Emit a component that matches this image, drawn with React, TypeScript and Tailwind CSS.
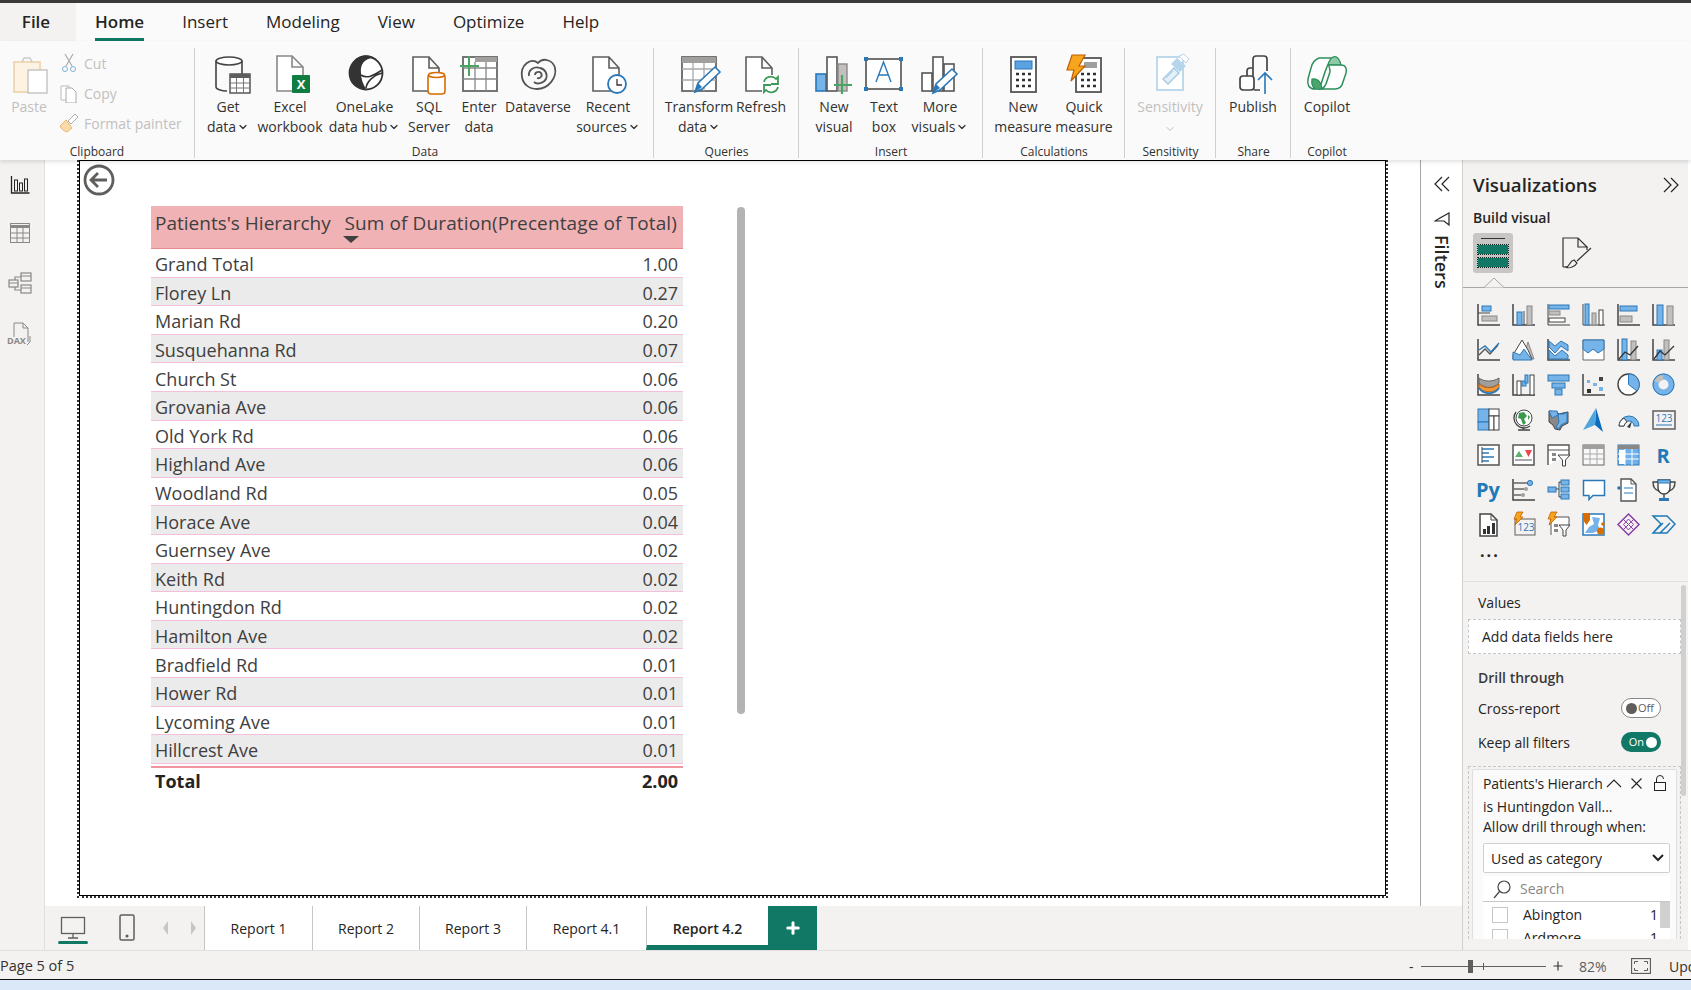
import type { ReactNode } from 'react'
import { ChevronDown, Plus } from 'lucide-react'

const SEGOE = "font-['Open_Sans',sans-serif]"

type RectProps = { x: number; y: number; w: number; h: number }
const Blue = ({ x, y, w, h }: RectProps) => <rect x={x} y={y} width={w} height={h} fill="#76b3e8" stroke="#2a78b8" />
const Grey = ({ x, y, w, h }: RectProps) => <rect x={x} y={y} width={w} height={h} fill="#c2c0be" stroke="#8a8886" />
const Line = ({ x, y, w, h }: RectProps) => <rect x={x} y={y} width={w} height={h} fill="#fff" stroke="#444" />
const Axis = () => <path d="M1 1v21h22" fill="none" stroke="#444" strokeWidth="1.5" />
const Frame = () => <rect x="1" y="2" width="21" height="20" fill="#fff" stroke="#555" strokeWidth="1.5" />
const Bolt = ({ x = 0, y = 0 }: { x?: number; y?: number }) => (
  <path transform={`translate(${x} ${y})`} d="M4 0h6L7 5h3L2 13l2-6H1z" fill="#f7a51c" stroke="#c15f00" strokeWidth=".8" />
)

const vizIcons: ReactNode[] = [
  <><Axis /><Blue x={5} y={3} w={9} h={5} /><Grey x={5} y={13} w={15} h={5} /><path d="M1 10h12" stroke="#444" /></>,
  <><Axis /><Blue x={5} y={9} w={5} h={13} /><Grey x={15} y={3} w={5} h={19} /><path d="M12 8v14" stroke="#444" /></>,
  <><path d="M1 1v21h22" fill="none" stroke="#444" /><Blue x={2} y={2} w={20} h={4} /><Grey x={2} y={8} w={11} h={4} /><Line x={2} y={15} w={16} h={4} /></>,
  <><path d="M1 1v21h22" fill="none" stroke="#444" /><Blue x={3} y={1} w={4} h={21} /><Grey x={10} y={10} w={4} h={12} /><Line x={17} y={7} w={4} h={15} /></>,
  <><Axis /><Blue x={3} y={3} w={17} h={5} /><Grey x={3} y={13} w={12} h={6} /></>,
  <><Axis /><Blue x={5} y={2} w={6} h={20} /><Grey x={15} y={3} w={6} h={19} /></>,
  <><Axis /><path d="M2 17l6-6 5 5 8-9" fill="none" stroke="#555" strokeWidth="1.4" /><path d="M2 12l6-4 6 6 8-9" fill="none" stroke="#2a78b8" strokeWidth="1.4" /></>,
  <><path d="M11 21l5-17 6 17z" fill="#c2c0be" stroke="#8a8886" /><path d="M1 21V17L10 2l6 10 4 9z" fill="#fff" stroke="#444" /><path d="M1 22v-8l7 3 4-6 8 11z" fill="#76b3e8" stroke="#2a78b8" /></>,
  <><Axis /><path d="M2 3l6 5 6-5 7 4v6l-7-5-6 7-6-6z" fill="#76b3e8" stroke="#2a78b8" /><path d="M2 12l6 6 7-6 6 5v4H2z" fill="#76b3e8" stroke="#2a78b8" /></>,
  <><path d="M1 2h21v20H1z" fill="#fff" stroke="#666" /><path d="M1 2h21v9l-6 4-5-4-5 4-5-4z" fill="#76b3e8" stroke="#2a78b8" /></>,
  <><Axis /><Blue x={5} y={1} w={5} h={21} /><Grey x={14} y={3} w={5} h={19} /><path d="M2 21l6-7 5 3 8-9" fill="none" stroke="#333" strokeWidth="1.3" /></>,
  <><Axis /><Blue x={5} y={12} w={5} h={10} /><Grey x={12} y={2} w={5} h={20} /><path d="M2 21l6-8 5 4 9-9" fill="none" stroke="#333" strokeWidth="1.3" /></>,
  <><Axis /><path d="M2 5c5 4 14 4 20 0v5c-6 6-14 6-20 0z" fill="#a19f9d" stroke="#666" /><path d="M2 11c6 5 14 5 20 0v4c-6 5-14 5-20 0z" fill="#f09a3e" stroke="#c15f00" /><path d="M2 15c5 7 15 7 20 0" fill="none" stroke="#2a78b8" strokeWidth="2" /></>,
  <><Axis /><Line x={5} y={8} w={4} h={14} /><Blue x={10} y={8} w={4} h={5} /><Blue x={13} y={2} w={3} h={8} /><Line x={18} y={2} w={4} h={20} /></>,
  <><Blue x={1} y={2} w={21} h={6} /><Blue x={5} y={10} w={13} h={5} /><Blue x={8} y={16} w={7} h={6} /></>,
  <><Axis /><rect x="5" y="7" width="3" height="3" fill="#76b3e8" /><rect x="11" y="10" width="4" height="3" fill="#76b3e8" /><rect x="17" y="14" width="4" height="4" fill="#76b3e8" /><rect x="17" y="4" width="4" height="4" fill="#444" /><rect x="5" y="16" width="4" height="4" fill="#333" /></>,
  <><circle cx="11.5" cy="11.5" r="10.5" fill="#fff" stroke="#444" strokeWidth="1.4" /><path d="M11.5 1A10.5 10.5 0 0 1 20 18L11.5 11.5z" fill="#76b3e8" stroke="#2a78b8" /></>,
  <><circle cx="11.5" cy="11.5" r="8" fill="none" stroke="#76b3e8" strokeWidth="6" /><path d="M2 8a10 10 0 0 1 9-6v5a5 5 0 0 0-4 3z" fill="#c2c0be" /><circle cx="11.5" cy="11.5" r="10.5" fill="none" stroke="#2a78b8" /></>,
  <><rect x="1" y="1" width="11" height="13" fill="#76b3e8" stroke="#2a78b8" /><rect x="1" y="14" width="11" height="8" fill="#76b3e8" stroke="#2a78b8" /><Line x={12} y={1} w={10} h={7} /><Line x={12} y={8} w={5} h={14} /><Line x={17} y={8} w={5} h={14} /></>,
  <><circle cx="12" cy="10" r="8" fill="#fff" stroke="#444" /><path d="M7 5l5-1 3 4-3 3 2 4-3 2-2-6-3-1zM16 7l2 2-2 3z" fill="#3c9a4d" /><path d="M4 4a10 10 0 0 0 14 14M11 19v3M6 22h12" fill="none" stroke="#444" strokeWidth="1.3" /></>,
  <><path d="M2 3l8 1 2 2 4-1 5-1v11l-6 3-2 4-5-1-2-4-4-3z" fill="#8a8886" stroke="#444" /><path d="M11 6h6l3-2v10l-6 3-2 4-3-2 3-5z" fill="#76b3e8" stroke="#2a78b8" /><path d="M2 3h8l1 4-6 3z" fill="#76b3e8" stroke="#2a78b8" /></>,
  <><path d="M14 0l7 24-8-7z" fill="#0f6cbd" /><path d="M14 0L1 22l12-5z" fill="#4fa6dd" /></>,
  <><path d="M2 18a10 10 0 0 1 20 0h-5a5 5 0 0 0-10 0z" fill="#76b3e8" stroke="#2a78b8" /><path d="M2 18a10 10 0 0 1 5-8l3 4a5 5 0 0 0-3 4z" fill="#fff" stroke="#444" /><path d="M10 19l5-6-2 7z" fill="#333" /></>,
  <><rect x="1" y="3" width="22" height="18" fill="#f3f2f1" stroke="#605e5c" strokeWidth="1.5" /><path d="M4 17h16" stroke="#2a78b8" /><text x="12" y="14" textAnchor="middle" fontSize="10" fill="#2a78b8" fontFamily="Open Sans">123</text></>,
  <><Frame /><path d="M5 6h12M5 10h7M5 14h12M5 18h7" stroke="#2a78b8" strokeWidth="1.5" /><path d="M5 4v16" stroke="#444" /></>,
  <><Frame /><path d="M3 14l4-6 4 6z" fill="#5cb26f" /><path d="M13 7h7l-3.5 7z" fill="#e8474d" /><path d="M3 17h17" stroke="#555" /></>,
  <><path d="M1 22V2h21v10" fill="#fff" stroke="#555" strokeWidth="1.4" /><path d="M1 7h21" stroke="#555" /><rect x="5" y="10" width="4" height="3" fill="#8a8886" /><rect x="5" y="15" width="4" height="3" fill="#8a8886" /><path d="M11 12h12l-4.5 5v6h-3v-6z" fill="#fff" stroke="#444" /></>,
  <><rect x="1" y="2" width="21" height="20" fill="#f8f8f8" stroke="#666" /><rect x="1" y="2" width="21" height="4" fill="#a19f9d" /><path d="M1 11h21M1 16h21M8 6v16M15 6v16" stroke="#aaa" /></>,
  <><rect x="1" y="2" width="21" height="20" fill="#6db0ea" stroke="#2a78b8" /><rect x="1" y="2" width="21" height="4" fill="#8a8886" /><rect x="2" y="7" width="6" height="14" fill="#fff" /><path d="M1 11h21M1 16h21M8 6v16M15 6v16" stroke="#fff" /></>,
  <text x="11" y="20" textAnchor="middle" fontSize="20" fontWeight="700" fill="#1f7ab8" fontFamily="Open Sans">R</text>,
  <text x="11" y="19" textAnchor="middle" fontSize="20" fontWeight="700" fill="#1f7ab8" fontFamily="Open Sans">Py</text>,
  <><Axis /><path d="M2 5h14M2 11h10M2 17h7" stroke="#666" strokeWidth="1.4" /><circle cx="18" cy="5" r="2.6" fill="#76b3e8" stroke="#2a78b8" /><circle cx="14" cy="11" r="2" fill="#a19f9d" /><circle cx="11" cy="17" r="2" fill="#a19f9d" /></>,
  <><rect x="1" y="9" width="8" height="5" fill="#76b3e8" stroke="#2a78b8" /><Blue x={14} y={2} w={8} h={5} /><Blue x={14} y={9} w={8} h={5} /><Blue x={14} y={16} w={8} h={5} /><path d="M9 11h3M12 4v15M12 4h2M12 19h2" fill="none" stroke="#444" /></>,
  <path d="M1.5 2.5h21v15H11l-4 4v-4H1.500z" fill="#fff" stroke="#2a78b8" strokeWidth="1.5" />,
  <><path d="M4 1h10l5 5v17H4z" fill="#fff" stroke="#555" strokeWidth="1.4" /><path d="M14 1v5h5" fill="none" stroke="#555" /><circle cx="2" cy="10" r="1.800" fill="#2a78b8" /><path d="M7 10h9M7 15h9" stroke="#2a78b8" /></>,
  <><path d="M6 2h12v8a6 6 0 0 1-12 0z" fill="#fff" stroke="#444" strokeWidth="1.4" /><path d="M6 2h12v3H6z" fill="#76b3e8" stroke="#2a78b8" /><path d="M6 4H1c0 6 2 8 6 9M18 4h5c0 6-2 8-6 9M12 16v4" fill="none" stroke="#444" strokeWidth="1.4" /><rect x="7" y="20" width="10" height="3" fill="#2a78b8" /></>,
  <><path d="M3 1h11l6 6v16H3z" fill="#fff" stroke="#444" strokeWidth="1.5" /><path d="M14 1v6h6" fill="none" stroke="#444" /><rect x="6" y="16" width="3" height="5" fill="#333" /><rect x="10" y="13" width="3" height="8" fill="#333" /><rect x="15" y="10" width="3" height="11" fill="#333" /></>,
  <><rect x="3" y="6" width="20" height="16" fill="#f3f2f1" stroke="#605e5c" /><text x="14" y="18" textAnchor="middle" fontSize="10" fill="#2a78b8" fontFamily="Open Sans">123</text><Bolt x={1} y={-1} /></>,
  <><path d="M4 22V4h18v8" fill="#fff" stroke="#555" /><rect x="7" y="11" width="4" height="3" fill="#8a8886" /><rect x="7" y="16" width="4" height="3" fill="#8a8886" /><path d="M12 12h11l-4 5v6h-3v-6z" fill="#fff" stroke="#444" /><Bolt x={0} y={-1} /></>,
  <><rect x="1" y="1" width="21" height="21" fill="#fff" stroke="#2a78b8" strokeWidth="1.500" /><path d="M10 4l8 1-2 7 2 5-7 3H3l4-6 5-3z" fill="#76b3e8" /><path d="M1 0h7v7l-3.500 5L1 7z" fill="#d86c00" /><circle cx="18.500" cy="18" r="3.500" fill="#d86c00" /><circle cx="21" cy="11" r="1.800" fill="#d86c00" /></>,
  <><path d="M11.500 1l10.500 10.500L11.500 22 1 11.500z" fill="none" stroke="#8a3fa8" strokeWidth="1.500" /><path d="M11.500 6l5 5.500-5 5.500-5-5.500zM6 6l11 11M17 6L6 17" fill="none" stroke="#8a3fa8" /></>,
  <path d="M1 3h14l8 8-8 9H1l8-9zM1 20l10-10M8 20l10-10" fill="none" stroke="#1f7ab8" strokeWidth="1.500" />,
]

const Ico = ({ children, size = 40 }: { children: ReactNode; size?: number }) => (
  <svg width={size} height={size} viewBox="0 0 40 40" fill="none" className="overflow-visible">{children}</svg>
)
const Doc = ({ x = 2, c = '#605e5c' }: { x?: number; c?: string }) => (
  <path d={`M${x} 36V2h16l10 11v23z M${x + 16} 2v11h10`} stroke={c} strokeWidth="1.600" fill="#fff" />
)

const ribbonIcons: Record<string, ReactNode> = {
  get: <g transform="translate(3 0)"><ellipse cx="18" cy="6" rx="13" ry="4" fill="#fff" stroke="#444" strokeWidth="1.600" /><path d="M5 6v26c0 2 5 4 11 4M31 6v14" stroke="#444" strokeWidth="1.600" /><rect x="19" y="19" width="20" height="19" fill="#fff" stroke="#555" strokeWidth="1.500" /><rect x="19" y="19" width="20" height="4" fill="#605e5c" /><path d="M19 28h20M19 33h20M25.500 23v15M32.500 23v15" stroke="#777" /></g>,
  excel: <><path d="M7 36V1h15l11 11v24z M22 1v11h11" stroke="#8a8886" strokeWidth="1.600" fill="#fff" /><rect x="22" y="20" width="18" height="18" rx="1" fill="#107c41" /><text x="31" y="34" textAnchor="middle" fontSize="13" fontWeight="700" fill="#fff" fontFamily="Open Sans">X</text></>,
  lake: <><circle cx="21" cy="18" r="16.500" fill="#fff" stroke="#333" strokeWidth="1.800" /><path d="M9 6C15-1 25-1 29 3 19 3 15 10 16 18c0 6 2 11 5 16C11 34 2 26 5 15c1-4 2-6 4-9z" fill="#333" /><path d="M16 20c6 4 12 1 21-5M21 33c1-7 8-13 16-15" stroke="#333" strokeWidth="1.600" /></>,
  sql: <><Doc x={4} /><rect x="19" y="19" width="17" height="20" rx="3" fill="#fff" stroke="#d86c00" strokeWidth="1.600" /><ellipse cx="27.500" cy="20" rx="8" ry="2.500" fill="#fff" stroke="#d86c00" strokeWidth="1.500" /></>,
  enter: <><rect x="4" y="2" width="34" height="34" fill="#fff" stroke="#666" strokeWidth="1.800" /><rect x="16" y="2" width="22" height="5" fill="#a19f9d" /><path d="M4 13h34M4 24h34M16 7v29M27 7v29" stroke="#888" strokeWidth="1.300" /><path d="M10 1v20M1 11h19" stroke="#4aa564" strokeWidth="2" /></>,
  dataverse: <><path d="M4 22C2 10 13 2 20 8c5-6 15-3 17 5 2 9-6 21-18 21C11 34 5 29 4 22z" stroke="#555" strokeWidth="1.800" /><path d="M11 21c-1-6 5-10 11-8 5 1 8 6 6 11-2 4-9 6-12 3" stroke="#555" strokeWidth="1.800" /><path d="M17 20c0-3 4-4 6-2 2 3-1 6-4 5" stroke="#555" strokeWidth="1.800" /></>,
  recent: <><Doc x={5} /><circle cx="29" cy="29" r="9" fill="#fff" stroke="#2a78b8" strokeWidth="1.800" /><path d="M29 24v6h5" stroke="#333" strokeWidth="1.300" /></>,
  transform: <><rect x="3" y="2" width="34" height="34" fill="#fff" stroke="#666" strokeWidth="1.800" /><rect x="3" y="2" width="34" height="6" fill="#a19f9d" /><path d="M3 14h34M3 25h34M14 8v28M25 8v28" stroke="#aaa" strokeWidth="1.300" /><path d="M16 37l3-9 17-16 5 5-18 17z" fill="#fff" stroke="#2a78b8" strokeWidth="1.600" /><path d="M16 37l3-9 4 4z" fill="#2a78b8" /></>,
  refresh: <><Doc x={5} /><rect x="21" y="20" width="18" height="19" fill="#fff" /><path d="M23 27a7 7 0 0 1 12-3l2-2v7h-7M37 32a7 7 0 0 1-12 3l-2 2v-7h7" stroke="#3b9a57" strokeWidth="1.800" fill="none" /></>,
  newv: <><rect x="2" y="19" width="10" height="17" fill="#76b3e8" stroke="#2a78b8" strokeWidth="1.600" /><rect x="13" y="2" width="10" height="34" fill="#fff" stroke="#555" strokeWidth="1.600" /><rect x="24" y="9" width="9" height="27" fill="#c2c0be" stroke="#8a8886" strokeWidth="1.400" /><path d="M28 20v19M20 30h18" stroke="#4aa564" strokeWidth="2.200" /></>,
  text: <><rect x="2" y="4" width="35" height="30" fill="#fff" stroke="#444" strokeWidth="1.500" /><path d="M12 27l7.500-20L27 27M15 20h9" stroke="#2a78b8" strokeWidth="1.400" /><rect x="0" y="2" width="4" height="4" fill="#2a78b8" /><rect x="35" y="2" width="4" height="4" fill="#2a78b8" /><rect x="0" y="32" width="4" height="4" fill="#2a78b8" /><rect x="35" y="32" width="4" height="4" fill="#2a78b8" /></>,
  more: <><rect x="2" y="18" width="10" height="18" fill="#fff" stroke="#555" strokeWidth="1.600" /><rect x="13" y="2" width="10" height="34" fill="#fff" stroke="#555" strokeWidth="1.600" /><rect x="24" y="9" width="10" height="27" fill="#fff" stroke="#555" strokeWidth="1.600" /><path d="M13 38l3-9 16-15 5 5-17 16z" fill="#fff" stroke="#2a78b8" strokeWidth="1.600" /><path d="M13 38l3-9 4 4z" fill="#2a78b8" /></>,
  measure: <><rect x="8" y="2" width="25" height="35" fill="#fff" stroke="#555" strokeWidth="1.800" /><rect x="12" y="6" width="17" height="8" fill="#5ba3e0" stroke="#2a78b8" /><path d="M13 19h3M19 19h3M25 19h3M13 25h3M19 25h3M25 25h3M13 31h3M19 31h3M25 31h3" stroke="#333" strokeWidth="2.600" /></>,
  quick: <><rect x="12" y="3" width="25" height="34" fill="#fff" stroke="#555" strokeWidth="1.800" /><rect x="20" y="7" width="13" height="6" fill="#a19f9d" /><path d="M17 19h3M23 19h3M29 19h3M17 25h3M23 25h3M29 25h3M17 31h3M23 31h3M29 31h3" stroke="#333" strokeWidth="2.600" /><path d="M8 0h13l-6 11h6L7 26l3-11H3z" fill="#f7a51c" stroke="#c15f00" strokeWidth="1.200" /></>,
  sens: <><rect x="7" y="2" width="26" height="33" fill="#fff" stroke="#b7d5ea" strokeWidth="1.800" /><path d="M13 24l11-11 5 5-11 11z" fill="#e4f0f8" stroke="#a7cbe3" strokeWidth="1.500" /><path d="M16 23l7-7" stroke="#a7cbe3" /><path d="M21 9l6-6 9 8-6 6z" fill="#b7d5ea" /><path d="M29 1l5-2 5 5-3 4z" fill="#fff" stroke="#b7d5ea" /></>,
  publish: <><rect x="7" y="21" width="14" height="14" rx="3" fill="#fff" stroke="#444" strokeWidth="1.700" /><path d="M14 21v-5a3 3 0 0 1 3-3h3M20 21V4a3 3 0 0 1 3-3h8a3 3 0 0 1 3 3v12M21 35h11" stroke="#444" strokeWidth="1.700" /><rect x="27" y="17" width="12" height="23" fill="#fafafa" /><path d="M32 39V18M25 25l7-7 7 7" stroke="#2a78b8" strokeWidth="1.600" /></>,
  copilot: <><path d="M12 3h14c-3 2-6 8-8 14l-3 9c-1 5-3 8-7 8-6 0-8-4-7-10l3-11c1-5 3-8 8-10z" fill="#fff" stroke="#2e8f5b" strokeWidth="1.500" /><path d="M26 2c4-2 7 3 8 8H21c1-4 3-7 5-8z" fill="#8ccba5" stroke="#2e8f5b" strokeWidth="1.200" /><path d="M21 10h13c5 0 6 4 5 8l-3 9c-1 4-4 7-8 7H14c3-1 5-4 6-8l3-9c0-3-1-7-2-7z" fill="#fff" stroke="#2e8f5b" strokeWidth="1.500" /><path d="M5 24c5-1 9 2 10 10-2 1-4 0-6 0-3-1-5-5-4-10z" fill="#4aa56f" stroke="#2e8f5b" strokeWidth="1.200" /></>,
}

const BigBtn = ({ icon, lines, chevron, disabled, className }: { icon: string; lines: string[]; chevron?: boolean; disabled?: boolean; className: string }) => (
  <div className={`flex flex-col items-center ${className}`}>
    <div className="h-[42px] flex items-start"><Ico>{ribbonIcons[icon]}</Ico></div>
    <div className={`flex flex-col items-center whitespace-nowrap text-[14px] leading-[20px] ${disabled ? 'text-[#c2c0be]' : 'text-[#323130]'}`}>
      {lines.map((l, i) => (
        <span key={l} className="flex items-center gap-[1px]">
          {l}
          {chevron && i === lines.length - 1 && <ChevronDown size={12} strokeWidth={2.500} />}
        </span>
      ))}
      {disabled && <ChevronDown size={12} strokeWidth={2} className="mt-[6px]" />}
    </div>
  </div>
)

const Group = ({ label, className, children }: { label: string; className: string; children: ReactNode }) => (
  <div className={`h-[110px] flex flex-col border-r border-[#d2d0ce] ${className}`}>
    <div className="flex h-[96px] shrink-0 pt-[7px]">{children}</div>
    <div className="h-[16px] text-center text-[12px] leading-[16px] text-[#323130]">{label}</div>
  </div>
)

const SmallBtn = ({ label, children }: { label: string; children: ReactNode }) => (
  <div className="flex items-center gap-[5px] h-[30px] ml-[1px] text-[14px] text-[#c2c0be] whitespace-nowrap">
    <svg width="20" height="20" viewBox="0 0 20 20" fill="none">{children}</svg>
    {label}
  </div>
)

const rows = [
  ['Grand Total', '1.00'], ['Florey Ln', '0.27'], ['Marian Rd', '0.20'], ['Susquehanna Rd', '0.07'], ['Church St', '0.06'],
  ['Grovania Ave', '0.06'], ['Old York Rd', '0.06'], ['Highland Ave', '0.06'], ['Woodland Rd', '0.05'], ['Horace Ave', '0.04'],
  ['Guernsey Ave', '0.02'], ['Keith Rd', '0.02'], ['Huntingdon Rd', '0.02'], ['Hamilton Ave', '0.02'], ['Bradfield Rd', '0.01'],
  ['Hower Rd', '0.01'], ['Lycoming Ave', '0.01'], ['Hillcrest Ave', '0.01'],
]

const Ribbon = () => (
  <div className="h-[119px] bg-[#fafafa] flex pt-[7px] shadow-[0_2px_4px_rgba(0,0,0,0.12)] relative z-10">
    <Group label="Clipboard" className="w-[195px]">
      <div className="w-[58px] flex flex-col items-center">
        <div className="h-[42px]">
          <svg width="42" height="40" viewBox="0 0 42 40" fill="none"><path d="M6 7h26v30H6z" fill="#fdf3e3" stroke="#f0d9b5" strokeWidth="2" /><path d="M14 7l2-4h6l2 4" stroke="#ccc" strokeWidth="1.500" /><rect x="20" y="15" width="19" height="23" fill="#fff" stroke="#c8c6c4" strokeWidth="1.500" /></svg>
        </div>
        <span className="text-[14px] leading-[20px] text-[#c2c0be]">Paste</span>
      </div>
      <div className="flex flex-col -mt-[7px]">
        <SmallBtn label="Cut"><path d="M6 1l7 12M14 1L7 13" stroke="#aaa" strokeWidth="1.200" /><circle cx="6" cy="16" r="2.500" stroke="#7fb2d8" /><circle cx="14" cy="16" r="2.500" stroke="#7fb2d8" /></SmallBtn>
        <SmallBtn label="Copy"><path d="M2 3h8v14H2z" fill="#fff" stroke="#bbb" /><path d="M7 5h6l4 4v11H7z" fill="#fff" stroke="#aaa" /></SmallBtn>
        <SmallBtn label="Format painter"><path d="M1 13l6-6 6 8-5 4c-3-1-6-3-7-6z" fill="#fbd9a9" stroke="#e9b775" /><path d="M9 8l7-7 3 3-7 7z" fill="#fff" stroke="#aaa" /></SmallBtn>
      </div>
    </Group>
    <Group label="Data" className="w-[459px] pl-[2px]">
      <BigBtn icon="get" lines={['Get', 'data']} chevron className="w-[62px]" />
      <BigBtn icon="excel" lines={['Excel', 'workbook']} className="w-[62px]" />
      <BigBtn icon="lake" lines={['OneLake', 'data hub']} chevron className="w-[87px]" />
      <BigBtn icon="sql" lines={['SQL', 'Server']} className="w-[42px]" />
      <BigBtn icon="enter" lines={['Enter', 'data']} className="w-[58px]" />
      <BigBtn icon="dataverse" lines={['Dataverse']} className="w-[60px]" />
      <BigBtn icon="recent" lines={['Recent', 'sources']} chevron className="w-[80px]" />
    </Group>
    <Group label="Queries" className="w-[145px] pl-[1px]">
      <BigBtn icon="transform" lines={['Transform', 'data']} chevron className="w-[88px]" />
      <BigBtn icon="refresh" lines={['Refresh']} className="w-[36px]" />
    </Group>
    <Group label="Insert" className="w-[184px] pl-[1px]">
      <BigBtn icon="newv" lines={['New', 'visual']} className="w-[68px]" />
      <BigBtn icon="text" lines={['Text', 'box']} className="w-[32px]" />
      <BigBtn icon="more" lines={['More', 'visuals']} chevron className="w-[80px]" />
    </Group>
    <Group label="Calculations" className="w-[142px] pl-[1px]">
      <BigBtn icon="measure" lines={['New', 'measure']} className="w-[78px]" />
      <BigBtn icon="quick" lines={['Quick', 'measure']} className="w-[44px]" />
    </Group>
    <Group label="Sensitivity" className="w-[91px] pl-[1px]">
      <BigBtn icon="sens" lines={['Sensitivity']} disabled className="w-[88px]" />
    </Group>
    <Group label="Share" className="w-[75px] pl-[1px]">
      <BigBtn icon="publish" lines={['Publish']} className="w-[72px]" />
    </Group>
    <Group label="Copilot" className="w-[72px] border-r-0">
      <BigBtn icon="copilot" lines={['Copilot']} className="w-[72px]" />
    </Group>
  </div>
)

const Sidebar = () => (
  <div className="w-[45px] flex flex-col items-center bg-[#f3f2f1] border-r border-[#e1dfdd] pt-[15px] pr-[4px] gap-[27px] shrink-0">
    <svg width="20" height="20" viewBox="0 0 20 20" fill="none" stroke="#252423"><path d="M1.500 1v17h18" strokeWidth="1.300" /><rect x="4.500" y="5" width="3" height="11" /><rect x="9.500" y="8" width="3" height="8" /><rect x="14.500" y="4" width="3" height="12" /></svg>
    <svg width="22" height="22" viewBox="0 0 22 22" fill="none" stroke="#8a8886"><rect x="1.500" y="1.500" width="19" height="19" /><path d="M1 4.500h20" strokeWidth="3" /><path d="M1 11h20M1 16h20M8 5v16M14 5v16" /></svg>
    <svg width="24" height="24" viewBox="0 0 24 24" fill="none" stroke="#8a8886" strokeWidth="1.200"><rect x="1" y="9" width="9" height="7" /><rect x="13" y="2" width="10" height="8" /><rect x="13" y="14" width="10" height="8" /><path d="M1 12h9M13 5h10M13 17h10M7 9V6h6M7 16v3h6" /></svg>
    <div className="relative w-[24px] h-[24px]">
      <svg width="24" height="24" viewBox="0 0 24 24" fill="none" stroke="#8a8886"><path d="M6 15V1h9l5 5v14M15 1v5h5M22 14v6l-3 3" /></svg>
      <span className="absolute left-[-1px] top-[14px] text-[9px] leading-[9px] font-bold text-[#8a8886]">DAX</span>
    </div>
  </div>
)

const Canvas = () => (
  <div className="flex-1 bg-white pl-[32px] pr-[32px] pb-[8px] min-h-0">
    <div className="h-full border-l-2 border-r-2 border-b-2 border-dotted border-[#333]">
      <div className="relative h-full bg-white border border-black pl-[71px] pt-[45px] flex items-start gap-[54px]">
        <svg className="absolute left-[3px] top-[3px]" width="32" height="32" viewBox="0 0 32 32" fill="none" stroke="#605e5c" strokeWidth="2.800">
          <circle cx="16" cy="16" r="14" /><path d="M24 16H8M15 9l-7 7 7 7" />
        </svg>
        <div className="w-[532px] text-[#404040]">
          <div className="relative h-[43px] bg-[#f0b2b5] border-b border-[#e88b90] flex items-center justify-between pl-[4px] pr-[6px] pb-[7px] text-[19px]">
            <span>Patients's Hierarchy</span>
            <span className="tracking-[0.12px]">Sum of Duration(Precentage of Total)</span>
            <span className="absolute left-[192px] bottom-[5px] w-0 h-0 border-x-[8px] border-t-[7px] border-x-transparent border-t-[#404040]" />
          </div>
          {rows.map(([name, val], i) => (
            <div key={name} className={`h-[28.600px] flex items-center justify-between pl-[4px] pr-[5px] pt-[4px] border-b border-[#f5bfdc] text-[18px] ${i % 2 ? 'bg-[#ebebeb]' : 'bg-white'}`}>
              <span>{name}</span><span>{val}</span>
            </div>
          ))}
          <div className="h-[30px] mt-[2px] border-t-2 border-[#f2959f] flex items-center justify-between pl-[4px] pr-[5px] text-[18px] font-bold text-[#252423]">
            <span>Total</span><span>2.00</span>
          </div>
        </div>
        <div className="w-[8px] h-[507px] mt-[1px] rounded-full bg-[#b3b3b3]" />
      </div>
    </div>
  </div>
)

const tabs = [
  { name: 'Report 1', w: 'w-[108px]' },
  { name: 'Report 2', w: 'w-[107px]' },
  { name: 'Report 3', w: 'w-[107px]' },
  { name: 'Report 4.1', w: 'w-[120px]' },
]

const PageTabs = () => (
  <div className="h-[44px] shrink-0 bg-[#f3f2f1] flex">
    <div className="w-[159px] relative flex items-center">
      <svg className="ml-[15px]" width="26" height="26" viewBox="0 0 26 26" fill="none" stroke="#605e5c" strokeWidth="1.300"><rect x="1.500" y="2.500" width="23" height="16" /><path d="M13 18.500v4M8 23h10" /></svg>
      <span className="absolute left-[13px] bottom-[6px] w-[30px] h-[3px] rounded-full bg-[#117865]" />
      <svg className="ml-[32px]" width="18" height="28" viewBox="0 0 18 28" fill="none" stroke="#605e5c" strokeWidth="1.500"><rect x="2" y="1" width="14" height="25" rx="1.500" /><circle cx="9" cy="22" r=".8" /></svg>
      <span className="ml-[27px] w-0 h-0 border-y-[7px] border-r-[5px] border-y-transparent border-r-[#c8c6c4]" />
      <span className="ml-[23px] w-0 h-0 border-y-[7px] border-l-[5px] border-y-transparent border-l-[#c8c6c4]" />
    </div>
    {tabs.map((t) => (
      <div key={t.name} className={`h-full flex items-center justify-center bg-white border-l border-[#c8c6c4] text-[14px] text-[#252423] ${t.w}`}>{t.name}</div>
    ))}
    <div className="w-[122px] h-full flex items-center justify-center bg-white border-l border-[#c8c6c4] border-b-[5px] border-b-[#117865] pt-[5px] text-[14px] font-semibold text-[#252423]">Report 4.2</div>
    <div className="w-[49px] h-full flex items-center justify-center bg-[#117865]"><Plus size={18} strokeWidth={4} className="text-white" /></div>
  </div>
)

const FilterPane = () => (
  <div className="w-[42px] bg-white border-l border-[#a8a6a4] flex flex-col items-center shrink-0">
    <svg className="mt-[16px]" width="16" height="16" viewBox="0 0 16 16" fill="none" stroke="#252423" strokeWidth="1.200"><path d="M8 1L1 8l7 7M15 1L8 8l7 7" /></svg>
    <svg className="mt-[20px]" width="16" height="14" viewBox="0 0 16 14" fill="none" stroke="#252423" strokeWidth="1.200"><path d="M15 1v12l-5-4H1l5-3z" /></svg>
    <span className="mt-[9px] [writing-mode:vertical-rl] text-[18px] leading-[22px] font-semibold text-[#252423]">Filters</span>
  </div>
)

const VizPane = () => (
  <div className="w-[229px] shrink-0 flex bg-white">
    <div className="w-[226px] bg-[#f3f2f1] border-l border-[#d2d0ce] flex flex-col overflow-hidden">
      <div className="h-[50px] shrink-0 flex items-center justify-between pl-[10px] pr-[9px]">
        <span className="text-[18.700px] font-semibold text-[#252423] leading-[26px]">Visualizations</span>
        <svg width="16" height="16" viewBox="0 0 16 16" fill="none" stroke="#252423" strokeWidth="1.200"><path d="M1 1l7 7-7 7M8 1l7 7-7 7" /></svg>
      </div>
      <div className="pl-[10px] mt-[-2px] text-[14px] font-semibold leading-[20px] text-[#252423]">Build visual</div>
      <div className="flex items-center pl-[10px] mt-[5px] gap-[47px]">
        <div className="w-[40px] h-[40px] rounded-[3px] bg-[#c8c6c4] flex flex-col items-center pt-[5px]">
          <span className="w-[24px] h-px bg-[#333]" />
          <span className="w-[30px] h-[9px] mt-[6px] bg-[#117865] outline-1 outline-dotted outline-[#222]" />
          <span className="w-[30px] h-[9px] mt-[4px] bg-[#117865] outline-1 outline-dotted outline-[#222]" />
        </div>
        <svg width="32" height="32" viewBox="0 0 32 32" fill="none" stroke="#333" strokeWidth="1.200"><path d="M3 30V1h15l9 9h-9V1M27 10v3M3 30h5" /><path d="M31 11L17 24M12 30c-2 1-5 1-6 0 4 0 3-6 8-7l3 3c-1 2-2 3-5 4z" /></svg>
      </div>
      <div className="relative h-[15px] shrink-0 border-b border-[#a8a6a4]">
        <svg className="absolute left-[20px] bottom-[-1px]" width="22" height="11" viewBox="0 0 22 11" fill="none"><path d="M0 10.500h1L11 1l10 9.500h1" fill="#f3f2f1" stroke="#a8a6a4" /></svg>
      </div>
      <div className="grid grid-cols-[repeat(6,23px)] gap-x-[12px] gap-y-[12px] pl-[14px] pt-[15px] shrink-0">
        {vizIcons.map((ic, i) => (
          <svg key={i} width="23" height="23" viewBox="0 0 23 23" className="overflow-visible">{ic}</svg>
        ))}
      </div>
      <div className="pl-[17px] mt-[8px] h-[14px] shrink-0 text-[#252423] font-bold tracking-[2px] leading-[14px]">...</div>
      <div className="mt-[23px] border-t border-[#e1dfdd] flex flex-1 min-h-0 relative">
        <div className="flex-1 min-w-0 pl-[5px] text-[14px] text-[#252423]">
          <div className="pl-[10px] pt-[11px] h-[37px] text-[14px] leading-[20px]">Values</div>
          <div className="h-[35px] border border-dashed border-[#c8c6c4] bg-white pl-[13px] flex items-center">Add data fields here</div>
          <div className="pl-[10px] mt-[14px] font-semibold text-[#3b3a39] leading-[20px]">Drill through</div>
          <div className="pl-[10px] pr-[20px] mt-[10px] flex items-center justify-between h-[20px]">
            <span>Cross-report</span>
            <span className="w-[40px] h-[20px] rounded-full border border-[#8a8886] bg-white flex items-center pl-[4px] gap-[1px] text-[11px] text-[#605e5c]"><span className="w-[11px] h-[11px] rounded-full bg-[#605e5c]" />Off</span>
          </div>
          <div className="pl-[10px] pr-[20px] mt-[14px] flex items-center justify-between h-[20px]">
            <span>Keep all filters</span>
            <span className="w-[40px] h-[20px] rounded-full bg-[#117865] flex items-center justify-end pr-[4px] gap-[2px] text-[11px] text-white">On<span className="w-[11px] h-[11px] rounded-full bg-white" /></span>
          </div>
          <div className="mt-[14px] h-[173px] overflow-hidden border border-b-0 border-dashed border-[#c8c6c4] px-[3px] pt-[2px]">
            <div className="bg-[#fafafa] border border-[#e1dfdd] rounded-[2px] h-[200px] pl-[10px] pr-[5px]">
              <div className="flex items-center h-[25px] pt-[1px] whitespace-nowrap">
                <span className="w-[120px] tracking-[-0.15px]">Patients's Hierarch</span>
                <svg className="ml-[3px]" width="16" height="10" viewBox="0 0 16 10" fill="none" stroke="#252423" strokeWidth="1.100"><path d="M1 9l7-7 7 7" /></svg>
                <svg className="ml-[9px]" width="11" height="11" viewBox="0 0 11 11" fill="none" stroke="#252423" strokeWidth="1.100"><path d="M.5.5l10 10M10.500.5l-10 10" /></svg>
                <svg className="ml-[11px]" width="14" height="16" viewBox="0 0 14 16" fill="none" stroke="#252423"><rect x="1.500" y="7.500" width="11" height="8" /><path d="M3.500 7V4a3.500 3.500 0 0 1 7 0" /></svg>
              </div>
              <div className="leading-[20px] mt-[2px]">is Huntingdon Vall...</div>
              <div className="leading-[20px]">Allow drill through when:</div>
              <div className="mt-[6px] h-[30px] bg-white border border-[#d2d0ce] rounded-[2px] flex items-center justify-between pl-[7px] pr-[5px] mr-[1px]">
                <span>Used as category</span>
                <svg width="12" height="8" viewBox="0 0 12 8" fill="none" stroke="#252423" strokeWidth="2"><path d="M1 1l5 5 5-5" /></svg>
              </div>
              <div className="h-[26px] mt-[3px] mr-[1px] bg-white border-b border-[#c8c6c4] flex items-center pl-[9px] gap-[8px] text-[#8a8886]">
                <svg width="20" height="20" viewBox="0 0 20 20" fill="none" stroke="#444" strokeWidth="1.200"><circle cx="12" cy="8" r="6" /><path d="M8 12l-6 7" /></svg>Search
              </div>
              <div className="relative mr-[1px] bg-white">
                <div className="flex items-center h-[25px] pl-[9px] pr-[12px]"><span className="w-[16px] h-[16px] border border-[#c8c6c4] mr-[15px]" /><span className="flex-1">Abington</span><span>1</span></div>
                <div className="flex items-center h-[20px] pl-[9px] pr-[12px]"><span className="w-[16px] h-[16px] border border-[#c8c6c4] mr-[15px]" /><span className="flex-1">Ardmore</span><span>1</span></div>
                <span className="absolute right-0 top-0 w-[10px] h-[26px] bg-[#d0d0d0]" />
              </div>
            </div>
          </div>
        </div>
        <div className="w-[7px] shrink-0 pt-[3px]"><div className="w-[5px] h-[211px] rounded-full bg-[#d2d0ce]" /></div>
      </div>
    </div>
  </div>
)

export default function App() {
  return (
    <div className={`w-[1691px] h-[990px] overflow-hidden flex flex-col bg-white ${SEGOE}`}>
      <div className="h-[3px] bg-[#3b3a39] shrink-0" />
      <div className="h-[38px] bg-[#fafafa] flex shrink-0 text-[17px] text-[#252423]">
        <div className="w-[76px] bg-[#f3f2f1] flex items-center justify-center pr-[4px] font-semibold">File</div>
        <div className="ml-[19px] flex gap-[38px]">
          <div className="h-full flex items-center border-b-[3px] border-[#117865] pt-[3px] font-semibold">Home</div>
          {['Insert', 'Modeling', 'View', 'Optimize', 'Help'].map((t) => (
            <div key={t} className="h-full flex items-center">{t}</div>
          ))}
        </div>
      </div>
      <Ribbon />
      <div className="h-[790px] shrink-0 flex">
        <Sidebar />
        <div className="flex-1 min-w-0 flex flex-col">
          <div className="flex-1 min-h-0 flex">
            <Canvas />
            <FilterPane />
          </div>
          <PageTabs />
        </div>
        <VizPane />
      </div>
      <div className="h-[29px] shrink-0 bg-[#f3f2f1] flex items-center pt-[2px] text-[14px] text-[#323130] border-t border-[#e1dfdd]">
        <span className="text-[14.500px]">Page 5 of 5</span>
        <div className="ml-auto flex items-center whitespace-nowrap">
          <span className="w-[9px]">-</span>
          <div className="relative w-[125px] h-px bg-[#605e5c] mx-[3px]">
            <span className="absolute left-[47px] top-[-6px] w-[5px] h-[13px] bg-[#605e5c]" />
            <span className="absolute left-[62px] top-[-3px] w-px h-[7px] bg-[#605e5c]" />
          </div>
          <Plus size={14} strokeWidth={2} className="ml-[2px]" />
          <span className="ml-[14px] w-[36px] text-[#605e5c]">82%</span>
          <svg className="ml-[16px]" width="20" height="16" viewBox="0 0 20 16" fill="none" stroke="#605e5c"><rect x=".5" y=".5" width="19" height="15" strokeWidth="1.300" /><path d="M3.500 6V3.500H7M16.500 6V3.500H13M3.500 10v2.500H7M16.500 10v2.500H13" /></svg>
          <span className="ml-[18px] w-[22px] overflow-hidden">Upd</span>
        </div>
      </div>
      <div className="flex-1 border-t border-[#111] bg-[#dbe8f8]" />
    </div>
  )
}
